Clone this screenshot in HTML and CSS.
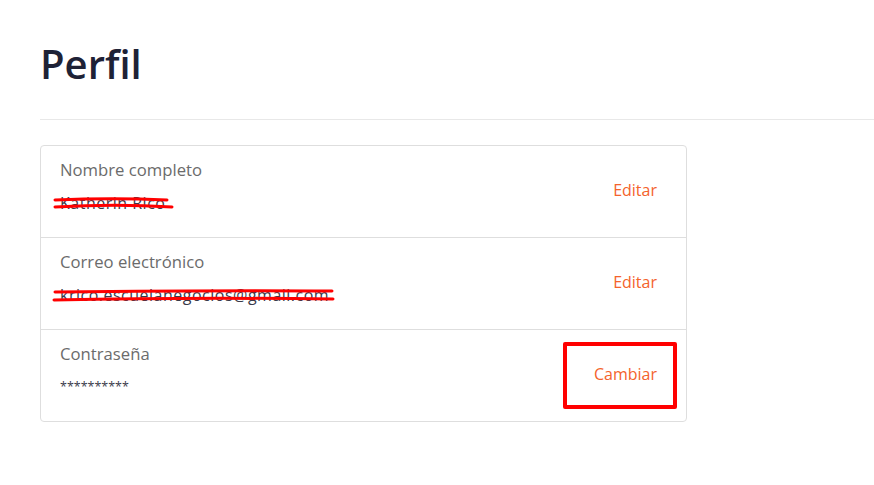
FILE: index.html
```html
<!DOCTYPE html>
<html lang="es">
<head>
<meta charset="utf-8">
<link rel="stylesheet" href="styles.css">
</head>
<body>
<main class="page">
  <header class="page-header">
    <h1 class="title">Perfil</h1>
  </header>
  <section class="card">
    <div class="row">
      <div class="field">
        <div class="label">Nombre completo</div>
        <div class="value"><span class="redacted">Katherin Rico<svg class="scribble" width="130" height="30" viewBox="0 0 130 30"><path d="M-5 7 C20 6 60 5 107 7" /><path d="M-5 14 C30 12 80 12 112 14" /></svg></span></div>
      </div>
      <a class="action">Editar</a>
    </div>
    <div class="row">
      <div class="field">
        <div class="label">Correo electrónico</div>
        <div class="value"><span class="redacted">krico.escuelanegocios@gmail.com<svg class="scribble" width="290" height="30" viewBox="0 0 290 30"><path d="M-5 7 C80 6 180 5 272 6" /><path d="M-6 15 C90 13 190 13 273 14" /></svg></span></div>
      </div>
      <a class="action">Editar</a>
    </div>
    <div class="row">
      <div class="field">
        <div class="label">Contraseña</div>
        <div class="value password">**********</div>
      </div>
      <a class="action boxed">Cambiar</a>
    </div>
  </section>
</main>
</body>
</html>
```

FILE: styles.css
```css
* { box-sizing: border-box; }

html, body {
  margin: 0;
  background: #ffffff;
}

body {
  font-family: "Open Sans", "Lato", sans-serif;
  color: #333333;
}

.page {
  padding-left: 40px;
}

.page-header {
  border-bottom: 1px solid #e8e8e8;
  padding-top: 37px;
  padding-bottom: 29px;
}

.title {
  margin: 0;
  font-size: 40px;
  line-height: 53px;
  font-weight: 600;
  color: #1e2236;
}

.card {
  margin-top: 25px;
  width: 647px;
  border: 1px solid #dedede;
  border-radius: 4px;
}

.row {
  display: flex;
  align-items: center;
  justify-content: space-between;
  padding: 13px 29px 24px 19px;
  border-bottom: 1px solid #dedede;
}

.row:last-child {
  border-bottom: none;
}

.label {
  font-size: 16.7px;
  line-height: 22px;
  color: #6b6b6b;
}

.value {
  margin-top: 12px;
  font-size: 16px;
  line-height: 20px;
  letter-spacing: 0.5px;
  color: #3a3a4a;
}

.password {
  font-size: 12.5px;
  letter-spacing: 0;
}

.redacted {
  position: relative;
  display: inline-block;
}

.scribble {
  position: absolute;
  left: 0;
  top: 0;
  overflow: visible;
}

.scribble path {
  fill: none;
  stroke: #ff0000;
  stroke-width: 3;
  stroke-linecap: round;
}

.action {
  position: relative;
  margin-top: 8px;
  font-size: 16px;
  line-height: 20px;
  color: #f4632c;
  cursor: pointer;
}

.boxed::after {
  content: "";
  position: absolute;
  left: -31px;
  right: -20px;
  top: -22px;
  bottom: -25px;
  border: 4px solid #ff0000;
  border-radius: 2px;
}
```
